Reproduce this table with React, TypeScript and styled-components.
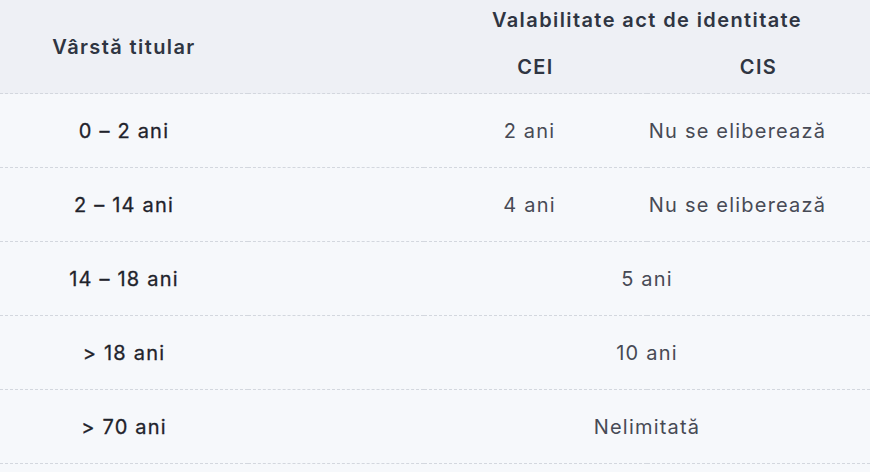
import React from 'react';
import styled, { createGlobalStyle } from 'styled-components';

const GlobalStyle = createGlobalStyle`
  html, body {
    margin: 0;
    padding: 0;
    background: #f6f8fb;
  }
  body {
    font-family: Inter, "Open Sans", "DejaVu Sans", sans-serif;
  }
`;

const Table = styled.table`
  width: 870px;
  border-collapse: collapse;
  table-layout: fixed;
  font-family: Inter, "Open Sans", sans-serif;
`;

const Head = styled.thead`
  background: #eef0f5;
`;

const HeadCell = styled.th<{ $h?: number }>`
  height: ${(p) => p.$h || 40}px;
  padding: 0;
  font-size: 20px;
  font-weight: 600;
  letter-spacing: 1.4px;
  color: #2f3542;
  text-align: center;
  vertical-align: middle;
`;

const Row = styled.tr`
  height: 74px;
  border-top: 1px dashed #d3d7de;
  &:last-child {
    border-bottom: 1px dashed #d3d7de;
  }
`;

const AgeCell = styled.td`
  padding: 0;
  font-size: 20px;
  font-weight: 400;
  letter-spacing: 1.2px;
  color: #1f232b;
  text-align: center;
  vertical-align: middle;
  -webkit-text-stroke: 0.3px #1f232b;
`;

const ValueCell = styled.td<{ $shift?: number }>`
  padding: 0 ${(p) => p.$shift || 0}px 0 0;
  font-size: 20px;
  font-weight: 400;
  letter-spacing: 1.2px;
  color: #474a55;
  text-align: center;
  vertical-align: middle;
`;

type Rule = { age: string; cei: string; cis?: string };

const rules: Rule[] = [
  { age: '0 – 2 ani', cei: '2 ani', cis: 'Nu se eliberează' },
  { age: '2 – 14 ani', cei: '4 ani', cis: 'Nu se eliberează' },
  { age: '14 – 18 ani', cei: '5 ani' },
  { age: '> 18 ani', cei: '10 ani' },
  { age: '> 70 ani', cei: 'Nelimitată' },
];

const App = () => {
  return (
    <>
      <GlobalStyle />
      <Table>
        <colgroup>
          <col style={{ width: 248 }} />
          <col style={{ width: 176 }} />
          <col style={{ width: 223 }} />
          <col style={{ width: 223 }} />
        </colgroup>
        <Head>
          <tr>
            <HeadCell rowSpan={2}>Vârstă titular</HeadCell>
            <HeadCell rowSpan={2} />
            <HeadCell colSpan={2} $h={40}>Valabilitate act de identitate</HeadCell>
          </tr>
          <tr>
            <HeadCell $h={53}>CEI</HeadCell>
            <HeadCell $h={53}>CIS</HeadCell>
          </tr>
        </Head>
        <tbody>
          {rules.map((r) => (
            <Row key={r.age}>
              <AgeCell>{r.age}</AgeCell>
              <ValueCell />
              {r.cis ? (
                <>
                  <ValueCell $shift={12}>{r.cei}</ValueCell>
                  <ValueCell $shift={42}>{r.cis}</ValueCell>
                </>
              ) : (
                <ValueCell colSpan={2}>{r.cei}</ValueCell>
              )}
            </Row>
          ))}
        </tbody>
      </Table>
    </>
  );
};

export default App;
